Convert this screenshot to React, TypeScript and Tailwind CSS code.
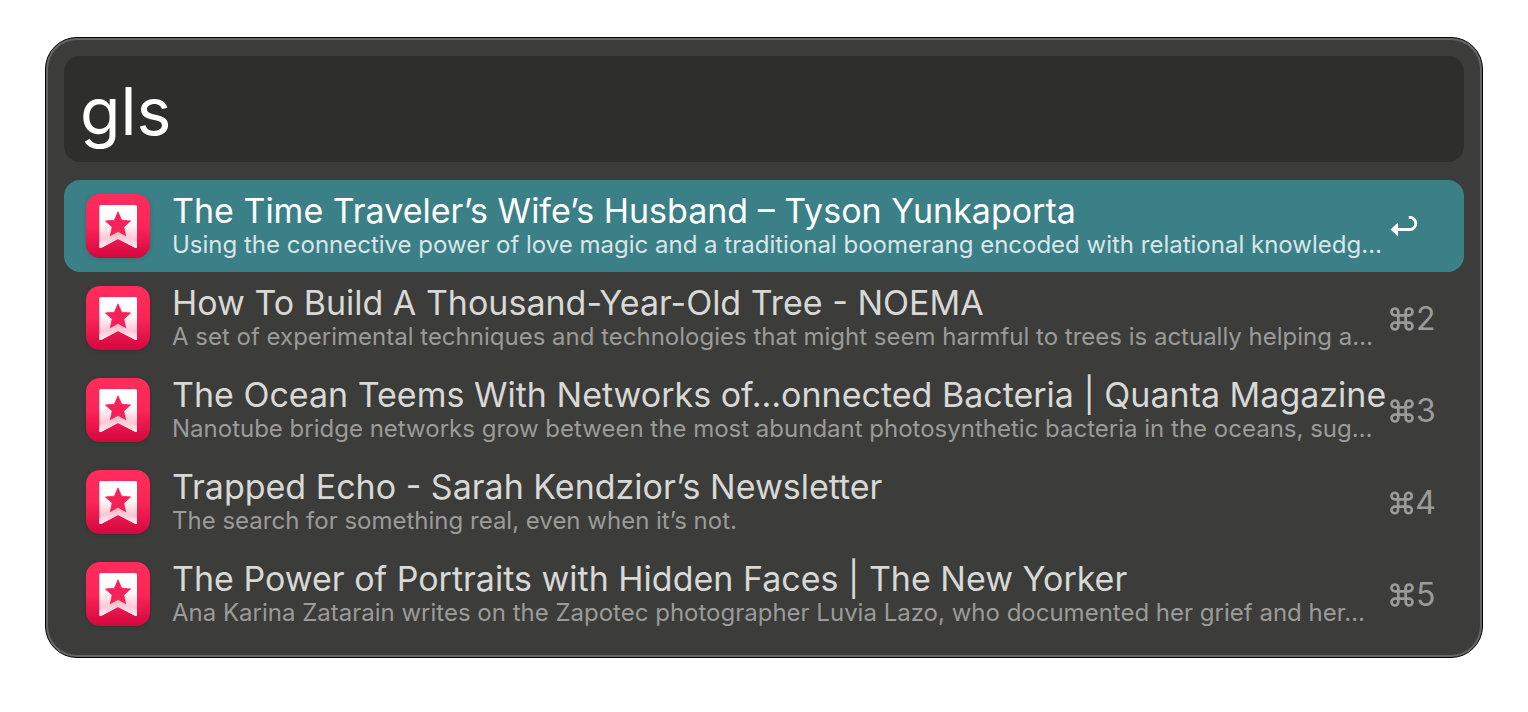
import { useState } from "react";

type Result = { title: string; subtitle: string; shortcut: string };

const results: Result[] = [
  {
    title: "The Time Traveler’s Wife’s Husband – Tyson Yunkaporta",
    subtitle:
      "Using the connective power of love magic and a traditional boomerang encoded with relational knowledg…",
    shortcut: "",
  },
  {
    title: "How To Build A Thousand-Year-Old Tree - NOEMA",
    subtitle:
      "A set of experimental techniques and technologies that might seem harmful to trees is actually helping a…",
    shortcut: "2",
  },
  {
    title: "The Ocean Teems With Networks of…onnected Bacteria | Quanta Magazine",
    subtitle:
      "Nanotube bridge networks grow between the most abundant photosynthetic bacteria in the oceans, sug…",
    shortcut: "3",
  },
  {
    title: "Trapped Echo - Sarah Kendzior’s Newsletter",
    subtitle: "The search for something real, even when it’s not.",
    shortcut: "4",
  },
  {
    title: "The Power of Portraits with Hidden Faces | The New Yorker",
    subtitle:
      "Ana Karina Zatarain writes on the Zapotec photographer Luvia Lazo, who documented her grief and her…",
    shortcut: "5",
  },
];

function BookmarkIcon() {
  return (
    <svg viewBox="0 0 64 64" className="size-16 shrink-0 overflow-visible drop-shadow-sm" aria-hidden="true">
      <defs>
        <linearGradient id="tile" x1="0" y1="0" x2="0" y2="1">
          <stop offset="0" stopColor="#ff2d5c" />
          <stop offset="0.5" stopColor="#fb2558" />
          <stop offset="1" stopColor="#d4063e" />
        </linearGradient>
        <linearGradient id="ribbon" x1="0" y1="0" x2="0" y2="1">
          <stop offset="0" stopColor="#ffffff" />
          <stop offset="0.45" stopColor="#fffafb" />
          <stop offset="0.8" stopColor="#ffc3d1" />
          <stop offset="1" stopColor="#ffb6c8" />
        </linearGradient>
        <linearGradient id="fold" x1="0" y1="0" x2="0" y2="1">
          <stop offset="0" stopColor="#ffb3c5" />
          <stop offset="1" stopColor="#fff0f3" />
        </linearGradient>
      </defs>
      <rect width="64" height="64" rx="14" fill="url(#tile)" />
      <path d="M14.600 11H49.400Q51 11 51 12.600V52.500Q51 54.800 49 53.700L32 45L15.500 53.700Q13.300 54.800 13.300 52.500V12.600Q13.300 11 14.600 11Z" fill="url(#ribbon)" />
      <path d="M32 17.800L35.600 26.200L44.600 27L37.800 33L39.800 42.200L32 37.400L24.200 42.200L26.200 33L19.400 27L28.400 26.200Z" fill="#f42256" stroke="#f42256" strokeWidth="0.8" strokeLinejoin="round" />
      <path d="M13.300 48L30.600 38.700Q32 38 33.400 38.700L51 48V52.500Q51 54.800 49 53.700L32 45L15.500 53.700Q13.300 54.800 13.300 52.500Z" fill="url(#fold)" />
    </svg>
  );
}

function ReturnIcon() {
  return (
    <svg viewBox="0 0 28 24" className="h-6 w-7" aria-label="Return" role="img">
      <path d="M18.800 2.400H20A5.700 6 0 0 1 20 14.500H6" fill="none" stroke="white" strokeWidth="2.900" />
      <path d="M0.500 14.500L8 7.500V21.500Z" fill="white" />
    </svg>
  );
}

function CommandIcon() {
  return (
    <svg viewBox="0 0 24 24" className="size-6" fill="none" stroke="currentColor" strokeWidth="2.700" aria-label="Command" role="img">
      <path d="M8.300 8.300V4.900A3.400 3.400 0 1 0 4.900 8.300H19.100A3.400 3.400 0 1 0 15.700 4.900V19.100A3.400 3.400 0 1 0 19.100 15.700H4.900A3.400 3.400 0 1 0 8.300 19.100Z" />
    </svg>
  );
}

function ResultRow({ result, selected, onSelect }: { result: Result; selected: boolean; onSelect: () => void }) {
  return (
    <li>
      <button
        type="button"
        onClick={onSelect}
        className={`flex h-23 w-full items-center rounded-2xl pr-7 pl-[22px] text-left ${selected ? "bg-[#3b8087]" : ""}`}
      >
        <BookmarkIcon />
        <span className="ml-[22px] flex min-w-0 flex-1 flex-col pt-0.5 whitespace-nowrap">
          <span className={`text-[34px] leading-9 ${selected ? "text-white" : "text-[#d8d8d6]"}`}>{result.title}</span>
          <span className={`text-2xl leading-8 ${selected ? "text-[#d8e6e7]" : "text-[#9b9b99]"}`}>
            {result.subtitle}
          </span>
        </span>
        <span className="flex w-[46px] shrink-0 items-center gap-0.5 pt-0.5 text-[32px] leading-9 text-[#9b9b99]">
          {result.shortcut === "" ? (
            <ReturnIcon />
          ) : (
            <>
              <CommandIcon />
              <span>{result.shortcut}</span>
            </>
          )}
        </span>
      </button>
    </li>
  );
}

export default function App() {
  const [query, setQuery] = useState("gls");
  const [selected, setSelected] = useState(0);
  return (
    <div className="min-h-screen bg-white px-[45px] py-[37px] font-['Inter','Liberation_Sans',sans-serif]">
      <main className="rounded-[32px] border border-black bg-[#666664] p-0.5">
        <div className="rounded-[29px] bg-[#3c3c3a] px-4 pt-4 pb-[15px]">
          <input
            type="text"
            aria-label="Search"
            value={query}
            onChange={(event) => setQuery(event.target.value)}
            className="block h-[106px] w-full rounded-2xl bg-[#2e2e2c] px-4 pt-1 text-[66px] text-white outline-none"
          />
          <ul className="mt-[18px]">
            {results.map((result, index) => (
              <ResultRow
                key={result.title}
                result={result}
                selected={index === selected}
                onSelect={() => setSelected(index)}
              />
            ))}
          </ul>
        </div>
      </main>
    </div>
  );
}
